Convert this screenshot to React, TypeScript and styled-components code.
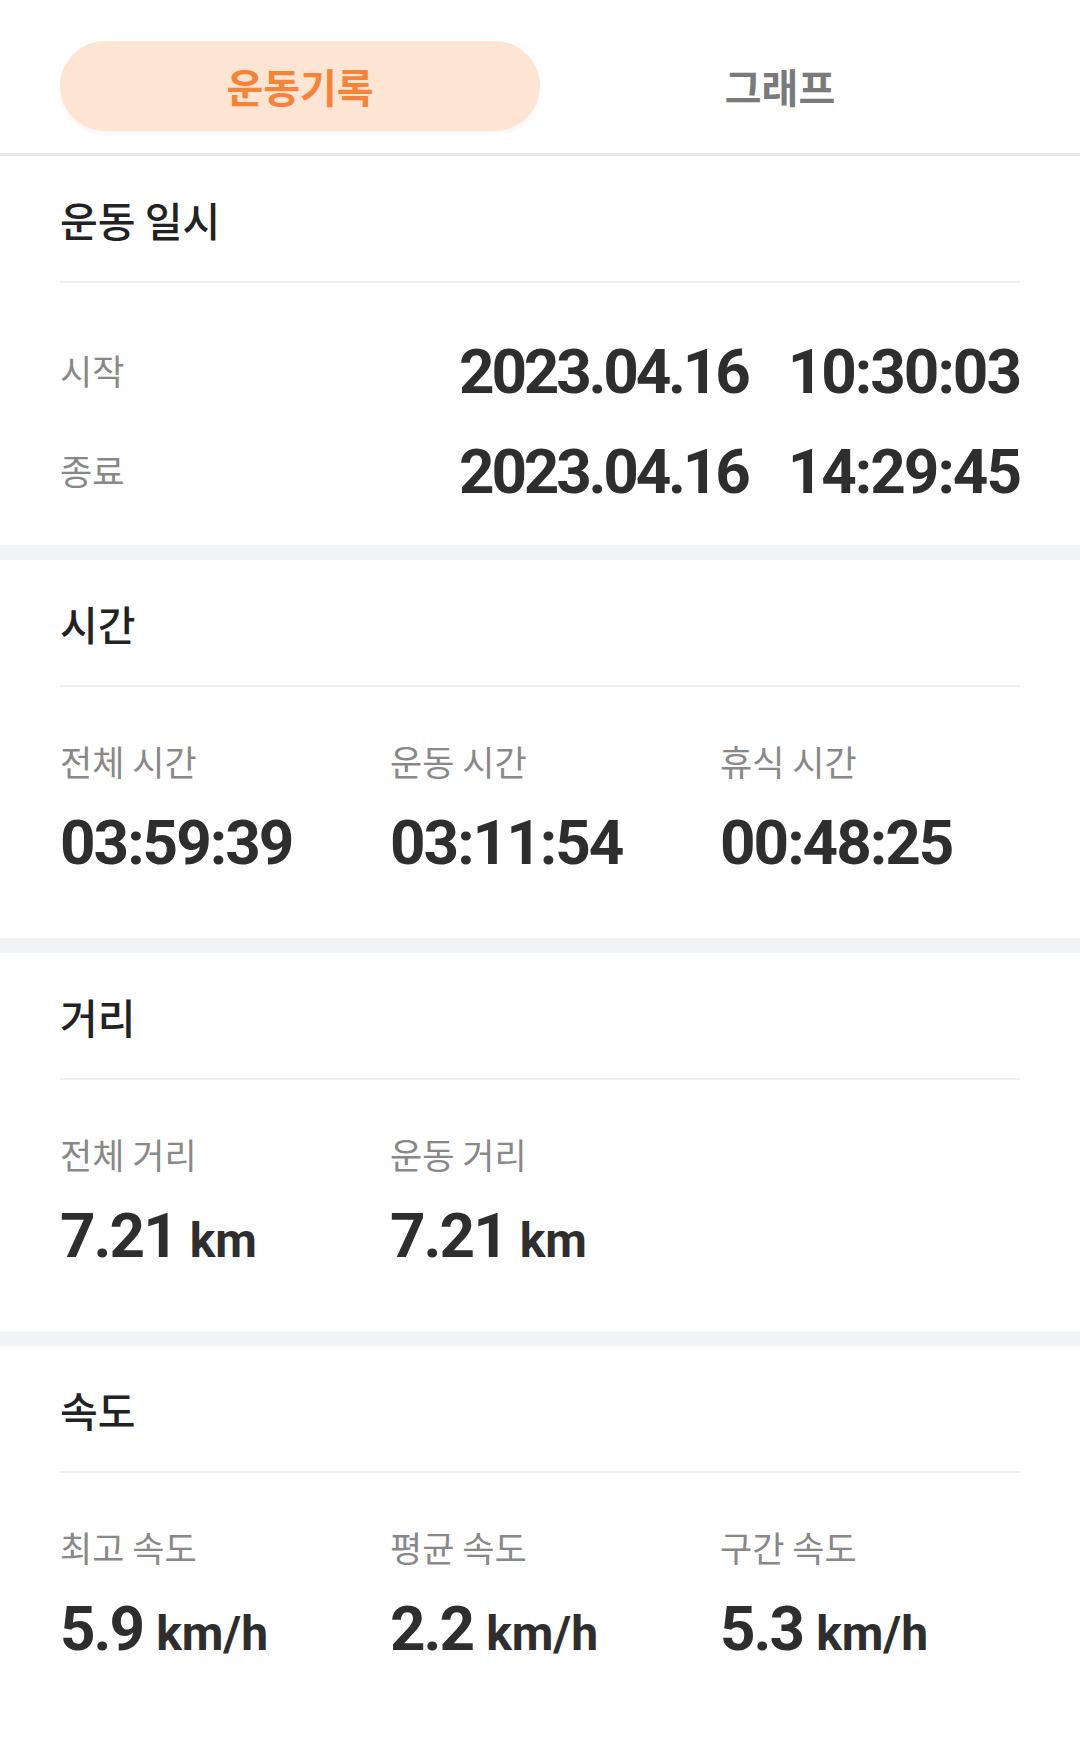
import styled, { createGlobalStyle } from "styled-components";

const GlobalStyle = createGlobalStyle`
  body {
    margin: 0;
    background: #ffffff;
    font-family: "Noto Sans CJK KR", "Noto Sans", sans-serif;
    color: #222222;
  }
`;

export const Wrapper = styled.div`
  width: 1080px;
  background: #f2f3f5;
`;

export const TabBar = styled.div`
  display: flex;
  padding: 41px 60px 22px;
  background: #ffffff;
  border-bottom: 3px solid #e8e8e8;
`;

export const Tab = styled.div<{ active?: boolean }>`
  flex: 1;
  height: 90px;
  border-radius: 45px;
  display: flex;
  align-items: center;
  justify-content: center;
  font-size: 40px;
  font-weight: 600;
  background: ${(props) => (props.active ? "#fee4d2" : "transparent")};
  color: ${(props) => (props.active ? "#f4843a" : "#7a7a7a")};
  box-shadow: ${(props) =>
    props.active ? "0 3px 4px rgba(0, 0, 0, 0.03)" : "none"};
`;

export const Section = styled.section`
  padding: 0 60px;
  background: #ffffff;
  margin-bottom: 15px;
`;

export const SectionTitle = styled.h2`
  margin: 0;
  height: 125px;
  display: flex;
  align-items: center;
  font-size: 41px;
  font-weight: 500;
  color: #222222;
  border-bottom: 2px solid #efefef;
`;

export const DateList = styled.div`
  display: flex;
  flex-direction: column;
  gap: 38px;
  padding: 58px 0 42px;
`;

export const DateRow = styled.div`
  height: 62px;
  display: flex;
  align-items: center;
  justify-content: space-between;
`;

export const Label = styled.div`
  font-size: 35px;
  line-height: 38px;
  color: #888888;
`;

export const RowLabel = styled(Label)`
  margin-top: -4px;
`;

export const Value = styled.div`
  display: flex;
  align-items: baseline;
  gap: 40px;
  font-family: Roboto, "Liberation Sans", sans-serif;
  font-weight: 700;
  font-size: 62px;
  line-height: 62px;
  letter-spacing: -2px;
  color: #2e2e2e;
`;

export const DatePart = styled.span`
  letter-spacing: -3.2px;
`;

export const StatGrid = styled.div`
  display: grid;
  grid-template-columns: 330px 330px 1fr;
  padding: 55px 0 64px;
`;

export const Stat = styled.div`
  display: flex;
  flex-direction: column;
  gap: 32px;
`;

export const Unit = styled.span`
  font-size: 48px;
  line-height: 46px;
  letter-spacing: 0;
  margin-left: -27px;
`;

type StatItem = { label: string; value: string; unit?: string };

const sections: { title: string; items: StatItem[] }[] = [
  {
    title: "시간",
    items: [
      { label: "전체 시간", value: "03:59:39" },
      { label: "운동 시간", value: "03:11:54" },
      { label: "휴식 시간", value: "00:48:25" },
    ],
  },
  {
    title: "거리",
    items: [
      { label: "전체 거리", value: "7.21", unit: "km" },
      { label: "운동 거리", value: "7.21", unit: "km" },
    ],
  },
  {
    title: "속도",
    items: [
      { label: "최고 속도", value: "5.9", unit: "km/h" },
      { label: "평균 속도", value: "2.2", unit: "km/h" },
      { label: "구간 속도", value: "5.3", unit: "km/h" },
    ],
  },
];

function App() {
  return (
    <Wrapper>
      <GlobalStyle />
      <TabBar>
        <Tab active>운동기록</Tab>
        <Tab>그래프</Tab>
      </TabBar>
      <Section>
        <SectionTitle>운동 일시</SectionTitle>
        <DateList>
          <DateRow>
            <RowLabel>시작</RowLabel>
            <Value>
              <DatePart>2023.04.16</DatePart>
              <span>10:30:03</span>
            </Value>
          </DateRow>
          <DateRow>
            <RowLabel>종료</RowLabel>
            <Value>
              <DatePart>2023.04.16</DatePart>
              <span>14:29:45</span>
            </Value>
          </DateRow>
        </DateList>
      </Section>
      {sections.map((section) => (
        <Section key={section.title}>
          <SectionTitle>{section.title}</SectionTitle>
          <StatGrid>
            {section.items.map((item) => (
              <Stat key={item.label}>
                <Label>{item.label}</Label>
                <Value>
                  {item.value}
                  {item.unit && <Unit>{item.unit}</Unit>}
                </Value>
              </Stat>
            ))}
          </StatGrid>
        </Section>
      ))}
    </Wrapper>
  );
}

export default App;
